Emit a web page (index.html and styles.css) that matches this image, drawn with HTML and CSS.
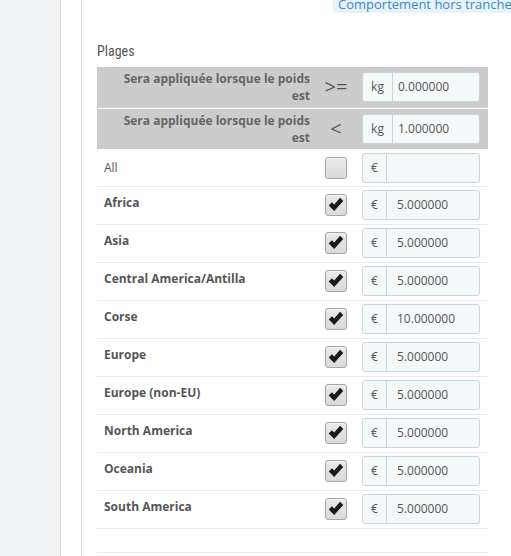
FILE: index.html
```html
<!DOCTYPE html>
<html lang="fr">
<head>
<meta charset="utf-8">
<title>Plages</title>
<link rel="stylesheet" href="styles.css">
</head>
<body>
<div class="page">
  <aside class="sidebar"></aside>
  <div class="gutter"></div>
  <main class="panel">
    <div class="topbar"><span class="range-btn">Comportement hors tranche</span></div>
    <h3 class="title">Plages</h3>
    <table class="ranges">
      <colgroup>
        <col class="c-label">
        <col class="c-op">
        <col class="c-val">
      </colgroup>
      <tbody>
        <tr class="head">
          <td class="label"><span class="hl">Sera appliquée lorsque le poids est</span></td>
          <td class="op">&gt;=</td>
          <td class="val"><div class="ig"><span class="addon kg">kg</span><span class="field kgf">0.000000</span></div></td>
        </tr>
        <tr class="head">
          <td class="label"><span class="hl">Sera appliquée lorsque le poids est</span></td>
          <td class="op">&lt;</td>
          <td class="val"><div class="ig"><span class="addon kg">kg</span><span class="field kgf">1.000000</span></div></td>
        </tr>
        <tr class="all">
          <td class="label">All</td>
          <td class="op"><span class="cb"></span></td>
          <td class="val"><div class="ig"><span class="addon eur">€</span><span class="field"></span></div></td>
        </tr>
        <tr class="zone">
          <td class="label"><div class="zl">Africa</div></td>
          <td class="op"><span class="cb"><svg viewBox="0 0 22 22"><polygon points="3,11.5 6.5,8 9,10.5 15.5,3 19,6.5 9,17.5"/></svg></span></td>
          <td class="val"><div class="ig"><span class="addon eur">€</span><span class="field">5.000000</span></div></td>
        </tr>
        <tr class="zone">
          <td class="label"><div class="zl">Asia</div></td>
          <td class="op"><span class="cb"><svg viewBox="0 0 22 22"><polygon points="3,11.5 6.5,8 9,10.5 15.5,3 19,6.5 9,17.5"/></svg></span></td>
          <td class="val"><div class="ig"><span class="addon eur">€</span><span class="field">5.000000</span></div></td>
        </tr>
        <tr class="zone">
          <td class="label"><div class="zl">Central America/Antilla</div></td>
          <td class="op"><span class="cb"><svg viewBox="0 0 22 22"><polygon points="3,11.5 6.5,8 9,10.5 15.5,3 19,6.5 9,17.5"/></svg></span></td>
          <td class="val"><div class="ig"><span class="addon eur">€</span><span class="field">5.000000</span></div></td>
        </tr>
        <tr class="zone">
          <td class="label"><div class="zl">Corse</div></td>
          <td class="op"><span class="cb"><svg viewBox="0 0 22 22"><polygon points="3,11.5 6.5,8 9,10.5 15.5,3 19,6.5 9,17.5"/></svg></span></td>
          <td class="val"><div class="ig"><span class="addon eur">€</span><span class="field">10.000000</span></div></td>
        </tr>
        <tr class="zone">
          <td class="label"><div class="zl">Europe</div></td>
          <td class="op"><span class="cb"><svg viewBox="0 0 22 22"><polygon points="3,11.5 6.5,8 9,10.5 15.5,3 19,6.5 9,17.5"/></svg></span></td>
          <td class="val"><div class="ig"><span class="addon eur">€</span><span class="field">5.000000</span></div></td>
        </tr>
        <tr class="zone">
          <td class="label"><div class="zl">Europe (non-EU)</div></td>
          <td class="op"><span class="cb"><svg viewBox="0 0 22 22"><polygon points="3,11.5 6.5,8 9,10.5 15.5,3 19,6.5 9,17.5"/></svg></span></td>
          <td class="val"><div class="ig"><span class="addon eur">€</span><span class="field">5.000000</span></div></td>
        </tr>
        <tr class="zone">
          <td class="label"><div class="zl">North America</div></td>
          <td class="op"><span class="cb"><svg viewBox="0 0 22 22"><polygon points="3,11.5 6.5,8 9,10.5 15.5,3 19,6.5 9,17.5"/></svg></span></td>
          <td class="val"><div class="ig"><span class="addon eur">€</span><span class="field">5.000000</span></div></td>
        </tr>
        <tr class="zone">
          <td class="label"><div class="zl">Oceania</div></td>
          <td class="op"><span class="cb"><svg viewBox="0 0 22 22"><polygon points="3,11.5 6.5,8 9,10.5 15.5,3 19,6.5 9,17.5"/></svg></span></td>
          <td class="val"><div class="ig"><span class="addon eur">€</span><span class="field">5.000000</span></div></td>
        </tr>
        <tr class="zone">
          <td class="label"><div class="zl">South America</div></td>
          <td class="op"><span class="cb"><svg viewBox="0 0 22 22"><polygon points="3,11.5 6.5,8 9,10.5 15.5,3 19,6.5 9,17.5"/></svg></span></td>
          <td class="val"><div class="ig"><span class="addon eur">€</span><span class="field">5.000000</span></div></td>
        </tr>
        <tr class="foot">
          <td colspan="3"></td>
        </tr>
      </tbody>
    </table>
  </main>
</div>
</body>
</html>
```
FILE: styles.css
```css
html, body {
  margin: 0;
  padding: 0;
  background: #fff;
  overflow: hidden;
}
body {
  font-family: "Open Sans", "Liberation Sans", sans-serif;
  font-size: 12px;
  color: #555;
}
.page {
  display: flex;
  height: 556px;
  width: 511px;
  overflow: hidden;
}
.sidebar {
  flex: 0 0 60px;
  background: #eff1f2;
  border-right: 1px solid #d6d8da;
}
.gutter {
  flex: 0 0 20px;
}
.panel {
  flex: 1 1 auto;
  min-width: 0;
  border-left: 1px solid #dcdcdc;
  padding-left: 15px;
}
.topbar {
  height: 13px;
  white-space: nowrap;
  padding-left: 236px;
}
.range-btn {
  display: inline-block;
  margin-top: -4px;
  line-height: 16px;
  padding: 0 5px 1px 5px;
  font-size: 13px;
  color: #3a8bc8;
  background: #e8f2f9;
  border-radius: 0 0 0 3px;
  vertical-align: top;
}
.title {
  margin: 28px 0 6px 0;
  font-family: "Roboto Condensed", "DejaVu Sans Condensed", "Liberation Sans", sans-serif;
  font-stretch: condensed;
  font-weight: normal;
  font-size: 14px;
  line-height: 20px;
  color: #555;
}
.ranges {
  width: 391px;
  border-collapse: collapse;
  table-layout: fixed;
}
.c-label { width: 221px; }
.c-op { width: 36px; }
.c-val { width: 134px; }
.ranges td {
  padding: 0;
  box-sizing: border-box;
}
.ranges td.op { text-align: center; vertical-align: middle; }
.ranges td.val { padding: 0 8px; vertical-align: middle; }

.head td {
  background: #cccccc;
  height: 41px;
  border-bottom: 1px solid #fff;
}
.head td.label {
  text-align: right;
  padding-right: 8px;
  vertical-align: middle;
}
.hl {
  display: inline-block;
  max-width: 195px;
  font-weight: bold;
  line-height: 17px;
  color: #666;
}
.head td.op {
  font-size: 20px;
  color: #555;
  line-height: 20px;
}
.all td {
  height: 37px;
  border-bottom: 1px solid #eaeaea;
}
.zone td {
  height: 38px;
  border-bottom: 1px solid #eaeaea;
}
.all td.label {
  padding-left: 7px;
  vertical-align: middle;
  line-height: 17px;
}
.zone td.label {
  padding-left: 7px;
  vertical-align: top;
}
.zl {
  padding-top: 7px;
  font-weight: bold;
  line-height: 17px;
  color: #555;
}
.foot td {
  height: 24px;
  border-bottom: 1px solid #eaeaea;
}
.cb {
  display: inline-flex;
  width: 20px;
  height: 20px;
  border: 1px solid #a6a6a6;
  border-radius: 3px;
  background: linear-gradient(#eaeaea, #d9d9d9);
  vertical-align: middle;
  align-items: center;
  justify-content: center;
  box-shadow: inset 0 1px 0 #f6f6f6;
}
.cb svg {
  width: 20px;
  height: 20px;
  fill: #1a1a1a;
}
.ig {
  display: flex;
  height: 28px;
  border: 1px solid #c7d6dd;
  border-radius: 3px;
  background: #f5f8f9;
  line-height: 28px;
}
.addon {
  flex: 0 0 auto;
  border-right: 1px solid #c7d6dd;
  text-align: center;
  color: #555;
}
.addon.kg { width: 29px; }
.addon.eur { width: 23px; }
.field {
  flex: 1 1 auto;
  padding-left: 10px;
  color: #555;
}
.field.kgf { padding-left: 5px; }
```
